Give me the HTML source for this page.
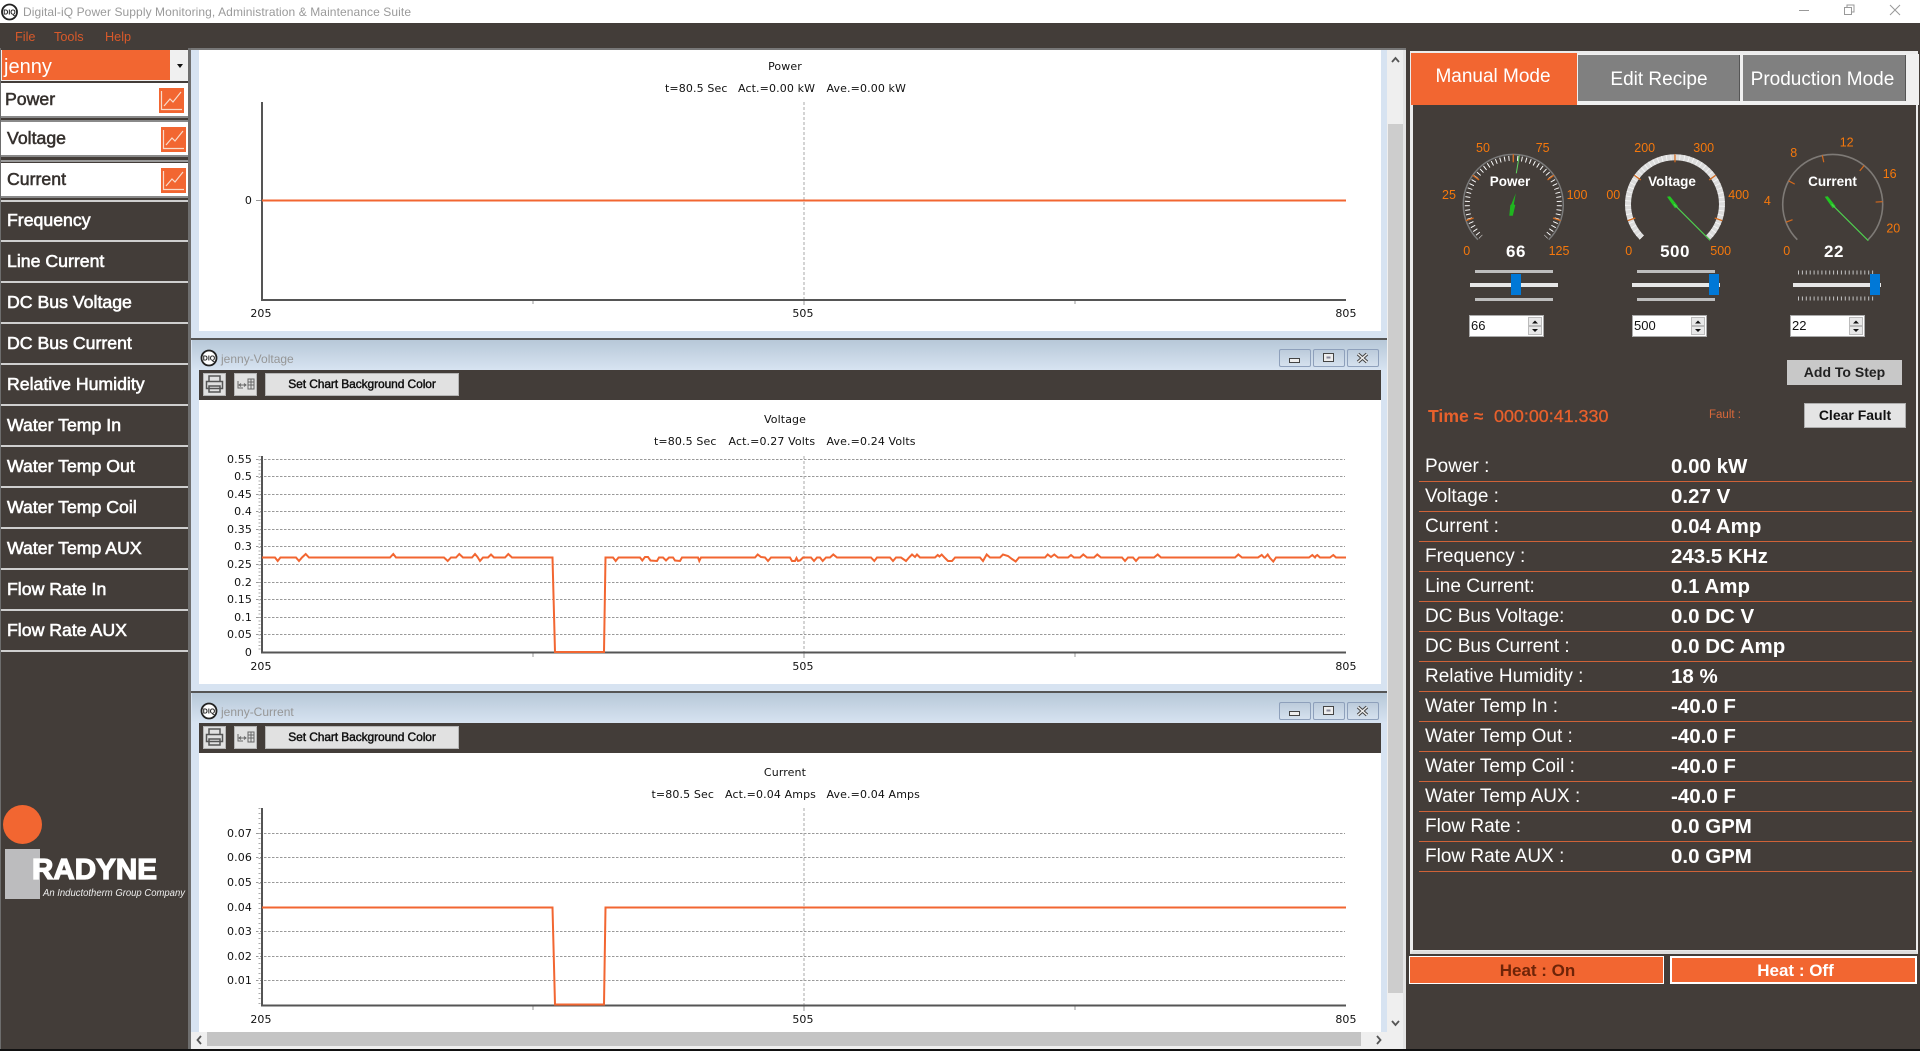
<!DOCTYPE html>
<html><head><meta charset="utf-8"><title>Digital-iQ</title>
<style>
html,body{margin:0;padding:0;width:1920px;height:1051px;overflow:hidden;background:#433d39;font-family:"Liberation Sans",sans-serif}
div{position:absolute;box-sizing:border-box}
.t{white-space:pre}
.nav{left:7px;color:#fff;font-size:17.7px;line-height:22px;-webkit-text-stroke:.6px #fff}
.sep{left:1px;width:187px;height:2px;background:#cfcfcf}
.wh{left:1px;width:187px;background:#fff;height:33px}
.navd{color:#35302d;font-size:17.7px;line-height:22px;-webkit-text-stroke:.55px #35302d}
.lb{left:1425px;color:#fff;font-size:19px;line-height:24px}
.vl{left:1671px;color:#fff;font-size:20.5px;font-weight:bold;line-height:24px}
.rl{left:1419px;width:493px;height:1px;background:#cf6238}
.spin{width:75px;height:22px;background:#fff;border:1px solid #ababab;color:#111;font-size:13px;line-height:20px;padding-left:1px}
.tbtn{background:#e1e1e1;border:1px solid #b5b5b5}
.wbtn{width:32px;height:18px;border:1px solid #8ea0bb;border-radius:2px;background:linear-gradient(#bccbdb,#d5e1ee)}
.tabt{color:#fff;font-size:19px;line-height:24px;text-align:center}
</style></head><body>

<!-- title bar -->
<div style="left:0;top:0;width:1920px;height:23px;background:#fff"></div>
<div class="t" style="left:15px;top:30px;color:#d8592a;font-size:12.7px;line-height:14px">File</div>
<div class="t" style="left:54px;top:30px;color:#d8592a;font-size:12.7px;line-height:14px">Tools</div>
<div class="t" style="left:105px;top:30px;color:#d8592a;font-size:12.7px;line-height:14px">Help</div>

<!-- left sidebar -->
<div style="left:0;top:48px;width:1px;height:1001px;background:#6d6d6d"></div>
<div style="left:188px;top:48px;width:3px;height:1001px;background:#6f6f6f"></div>
<div style="left:1px;top:50px;width:187px;height:31px;background:#f0f0f0"></div>
<div style="left:2px;top:50px;width:168px;height:30px;background:#f26631"></div>
<div class="t" style="left:4px;top:55px;color:#fff;font-size:20px;line-height:24px">jenny</div>
<div style="left:177px;top:64px;width:0;height:0;border-left:3px solid transparent;border-right:3px solid transparent;border-top:4px solid #111"></div>

<div class="wh" style="top:83px"></div><div class="sep" style="top:116px;background:#8a8a8a"></div><div class="sep" style="top:120px;background:#8a8a8a"></div>
<div class="wh" style="top:122px"></div><div class="sep" style="top:155px;background:#8a8a8a"></div><div class="sep" style="top:160px;background:#9a9a9a"></div>
<div class="wh" style="top:163px"></div><div class="sep" style="top:196px;background:#8a8a8a"></div>
<div class="t navd" style="left:5px;top:88px">Power</div>
<div class="t navd" style="left:7px;top:127px">Voltage</div>
<div class="t navd" style="left:7px;top:168px">Current</div>

<div class="sep" style="top:200px"></div><div class="sep" style="top:240px"></div><div class="sep" style="top:281px"></div><div class="sep" style="top:322px"></div><div class="sep" style="top:363px"></div><div class="sep" style="top:404px"></div><div class="sep" style="top:445px"></div><div class="sep" style="top:486px"></div><div class="sep" style="top:527px"></div><div class="sep" style="top:568px"></div><div class="sep" style="top:609px"></div><div class="sep" style="top:650px"></div>
<div class="t nav" style="top:209px">Frequency</div>
<div class="t nav" style="top:250px">Line Current</div>
<div class="t nav" style="top:291px">DC Bus Voltage</div>
<div class="t nav" style="top:332px">DC Bus Current</div>
<div class="t nav" style="top:373px">Relative Humidity</div>
<div class="t nav" style="top:414px">Water Temp In</div>
<div class="t nav" style="top:455px">Water Temp Out</div>
<div class="t nav" style="top:496px">Water Temp Coil</div>
<div class="t nav" style="top:537px">Water Temp AUX</div>
<div class="t nav" style="top:578px">Flow Rate In</div>
<div class="t nav" style="top:619px">Flow Rate AUX</div>

<!-- logo -->
<div style="left:3px;top:805px;width:39px;height:39px;border-radius:50%;background:#f26631"></div>
<div style="left:5px;top:849px;width:35px;height:50px;background:#bcbcbe"></div>

<!-- MDI area -->
<div style="left:191px;top:48px;width:1215px;height:1001px;background:#d7e3f1"></div>
<div style="left:191px;top:48px;width:1215px;height:2px;background:#777"></div>
<div style="left:199px;top:50px;width:1182px;height:281px;background:#fff"></div>

<!-- window 2 -->
<div style="left:191px;top:338px;width:1196px;height:2px;background:#555"></div>
<div style="left:192px;top:340px;width:1195px;height:30px;background:linear-gradient(#b7c8d8,#d7e3f1)"></div>
<div style="left:199px;top:370px;width:1182px;height:30px;background:#433d39"></div>
<div style="left:199px;top:400px;width:1182px;height:284px;background:#fff"></div>
<div class="t" style="left:221px;top:352px;color:#969696;font-size:12px;line-height:14px">jenny-Voltage</div>
<div class="tbtn" style="left:203px;top:373px;width:23px;height:23px"></div>
<div class="tbtn" style="left:234px;top:373px;width:23px;height:23px"></div>
<div class="tbtn t" style="left:265px;top:373px;width:194px;height:23px;text-align:center;font-size:12px;line-height:21px;color:#111;letter-spacing:-.1px;-webkit-text-stroke:.45px #111">Set Chart Background Color</div>
<div class="wbtn" style="left:1279px;top:349px"></div><div class="wbtn" style="left:1313px;top:349px"></div><div class="wbtn" style="left:1347px;top:349px"></div>

<!-- window 3 -->
<div style="left:191px;top:691px;width:1196px;height:2px;background:#555"></div>
<div style="left:192px;top:693px;width:1195px;height:30px;background:linear-gradient(#b7c8d8,#d7e3f1)"></div>
<div style="left:199px;top:723px;width:1182px;height:30px;background:#433d39"></div>
<div style="left:199px;top:753px;width:1182px;height:279px;background:#fff"></div>
<div class="t" style="left:221px;top:705px;color:#969696;font-size:12px;line-height:14px">jenny-Current</div>
<div class="tbtn" style="left:203px;top:726px;width:23px;height:23px"></div>
<div class="tbtn" style="left:234px;top:726px;width:23px;height:23px"></div>
<div class="tbtn t" style="left:265px;top:726px;width:194px;height:23px;text-align:center;font-size:12px;line-height:21px;color:#111;letter-spacing:-.1px;-webkit-text-stroke:.45px #111">Set Chart Background Color</div>
<div class="wbtn" style="left:1279px;top:702px"></div><div class="wbtn" style="left:1313px;top:702px"></div><div class="wbtn" style="left:1347px;top:702px"></div>

<!-- scrollbars -->
<div style="left:1387px;top:50px;width:16px;height:982px;background:#efefef"></div>
<div style="left:1403px;top:50px;width:3px;height:999px;background:#e4e4e4"></div>
<div style="left:1388px;top:124px;width:15px;height:869px;background:#cdcdcd"></div>
<div style="left:191px;top:1032px;width:1212px;height:17px;background:#efefef"></div>
<div style="left:207px;top:1032px;width:1154px;height:14px;background:#c4c4c4"></div>
<div style="left:0;top:1049px;width:1920px;height:2px;background:#111"></div>

<!-- right panel -->
<div style="left:1410px;top:51px;width:508px;height:903px;background:#e8e8e8;border:3px solid #ececec;border-right-width:2px;border-bottom-color:#ddd"></div>
<div style="left:1413px;top:54px;width:503px;height:896px;background:#433d39"></div>
<div style="left:1411px;top:53px;width:166px;height:52px;background:#f26631"></div>
<div style="left:1577px;top:54px;width:342px;height:51px;background:#f0f0f0"></div>
<div style="left:1578px;top:55px;width:162px;height:46px;background:#808080;border-right:1px solid #555"></div>
<div style="left:1743px;top:55px;width:163px;height:46px;background:#808080;border-right:1px solid #555"></div>
<div class="tabt t" style="left:1410px;top:65px;width:166px">Manual Mode</div>
<div class="tabt t" style="left:1578px;top:68px;width:162px">Edit Recipe</div>
<div class="tabt t" style="left:1742px;top:68px;width:161px">Production Mode</div>

<div class="spin" style="left:1469px;top:315px">66</div>
<div class="spin" style="left:1632px;top:315px">500</div>
<div class="spin" style="left:1790px;top:315px">22</div>

<div class="t" style="left:1787px;top:360px;width:115px;height:25px;background:#c8c8c8;text-align:center;font-size:14px;font-weight:bold;color:#222;line-height:25px">Add To Step</div>
<div class="t" style="left:1804px;top:403px;width:102px;height:25px;background:#e4e4e4;border:1px solid #adadad;text-align:center;font-size:14px;font-weight:bold;color:#111;line-height:23px">Clear Fault</div>
<div class="t" style="left:1428px;top:405px;color:#e8602c;font-size:17.6px;font-weight:bold;line-height:22px">Time ≈</div>
<div class="t" style="left:1494px;top:405px;color:#e8602c;font-size:17.9px;line-height:22px;-webkit-text-stroke:.3px #e8602c">000:00:41.330</div>
<div class="t" style="left:1709px;top:408px;color:#d9683a;font-size:11.5px;line-height:14px">Fault :</div>

<div class="t lb" style="top:455px">Power :</div><div class="t vl" style="top:455px">0.00 kW</div><div class="rl" style="top:481px"></div>
<div class="t lb" style="top:485px">Voltage :</div><div class="t vl" style="top:485px">0.27 V</div><div class="rl" style="top:511px"></div>
<div class="t lb" style="top:515px">Current :</div><div class="t vl" style="top:515px">0.04 Amp</div><div class="rl" style="top:541px"></div>
<div class="t lb" style="top:545px">Frequency :</div><div class="t vl" style="top:545px">243.5 KHz</div><div class="rl" style="top:571px"></div>
<div class="t lb" style="top:575px">Line Current:</div><div class="t vl" style="top:575px">0.1 Amp</div><div class="rl" style="top:601px"></div>
<div class="t lb" style="top:605px">DC Bus Voltage:</div><div class="t vl" style="top:605px">0.0 DC V</div><div class="rl" style="top:631px"></div>
<div class="t lb" style="top:635px">DC Bus Current :</div><div class="t vl" style="top:635px">0.0 DC Amp</div><div class="rl" style="top:661px"></div>
<div class="t lb" style="top:665px">Relative Humidity :</div><div class="t vl" style="top:665px">18 %</div><div class="rl" style="top:691px"></div>
<div class="t lb" style="top:695px">Water Temp In :</div><div class="t vl" style="top:695px">-40.0 F</div><div class="rl" style="top:721px"></div>
<div class="t lb" style="top:725px">Water Temp Out :</div><div class="t vl" style="top:725px">-40.0 F</div><div class="rl" style="top:751px"></div>
<div class="t lb" style="top:755px">Water Temp Coil :</div><div class="t vl" style="top:755px">-40.0 F</div><div class="rl" style="top:781px"></div>
<div class="t lb" style="top:785px">Water Temp AUX :</div><div class="t vl" style="top:785px">-40.0 F</div><div class="rl" style="top:811px"></div>
<div class="t lb" style="top:815px">Flow Rate :</div><div class="t vl" style="top:815px">0.0 GPM</div><div class="rl" style="top:841px"></div>
<div class="t lb" style="top:845px">Flow Rate AUX :</div><div class="t vl" style="top:845px">0.0 GPM</div><div class="rl" style="top:871px"></div>

<div class="t" style="left:1409px;top:956px;width:255px;height:28px;background:#f26631;border:1px solid #fff;text-align:center;color:#6e2408;font-size:17px;font-weight:bold;line-height:28px;padding-left:2px">Heat : On</div>
<div class="t" style="left:1670px;top:956px;width:247px;height:28px;background:#f26631;border:2px solid #fff;text-align:center;color:#fff;font-size:17px;font-weight:bold;line-height:26px;padding-left:4px">Heat : Off</div>

<!-- vector overlay -->
<svg width="1920" height="1051" viewBox="0 0 1920 1051" style="position:absolute;left:0;top:0" xmlns="http://www.w3.org/2000/svg" font-family="'DejaVu Sans',sans-serif">
<defs>
<g id="diq"><circle r="7.500" fill="#fff" stroke="#222" stroke-width="1.800"/><text y="2.500" text-anchor="middle" font-size="7" font-weight="bold" fill="#222" font-family="'Liberation Sans',sans-serif">DIQ</text></g>
<g id="chartico"><rect width="25" height="25" fill="#f26631"/><path d="M2.500 3V21.500H23M5 18L11 11L14 14L22 4" fill="none" stroke="#f8dccb" stroke-width="1.200"/></g>
<g id="toolicons">
<path d="M209 381v-5h11v5M206.500 381.500h16v7h-16zM209 386h11v6h-11z" fill="none" stroke="#555" stroke-width="1.500"/>
<path d="M238 381v7h5M240 385h5M244 383.500l2 1.500-2 1.500M241 383.500l-2 1.500 2 1.500M248 379h6v10h-6zM248 382h6M248 385h6M251 379v10" fill="none" stroke="#666" stroke-width="1"/>
</g>
<g id="wctl">
<rect x="1289.500" y="358.500" width="10" height="4" fill="#eee" stroke="#444" stroke-width="1"/>
<rect x="1323.500" y="353.500" width="10" height="8" fill="#eee" stroke="#444" stroke-width="1"/><rect x="1326.500" y="356.500" width="4" height="2" fill="#889" />
<path d="M1358 354l9 8M1367 354l-9 8" stroke="#444" stroke-width="3.500"/><path d="M1358 354l9 8M1367 354l-9 8" stroke="#eee" stroke-width="1.500"/>
</g>
</defs>

<!-- title bar -->
<use href="#diq" x="9.500" y="12"/>
<text x="23" y="16" font-family="'Liberation Sans',sans-serif" font-size="12" fill="#9a9a9a" textLength="388">Digital-iQ Power Supply Monitoring, Administration &amp; Maintenance Suite</text>
<path d="M1799 10.500h10" stroke="#999"/>
<path d="M1844.500 7.500h7v7h-7zM1847 7V5h7v7h-2.500" fill="none" stroke="#999"/>
<path d="M1890 5l10 10M1900 5l-10 10" stroke="#999"/>

<!-- sidebar icons -->
<use href="#chartico" x="159" y="88"/><use href="#chartico" x="161" y="127"/><use href="#chartico" x="161" y="168"/>

<!-- logo text -->
<text x="32" y="879" font-family="'Liberation Sans',sans-serif" font-size="29" font-weight="bold" fill="#fff" stroke="#fff" stroke-width="1.300" textLength="125" lengthAdjust="spacingAndGlyphs">RADYNE</text>
<text x="43" y="896" font-family="'Liberation Sans',sans-serif" font-size="10.500" font-style="italic" fill="#eee" textLength="142" lengthAdjust="spacingAndGlyphs">An Inductotherm Group Company</text>

<!-- window chrome icons -->
<use href="#diq" x="209" y="358"/><use href="#diq" x="209" y="711"/>
<use href="#toolicons"/><use href="#toolicons" y="353"/>
<use href="#wctl"/><use href="#wctl" y="353"/>

<!-- scrollbar arrows -->
<g fill="none" stroke="#555" stroke-width="1.800">
<path d="M1392 62l3.500-4 3.500 4"/><path d="M1392 1021l3.500 4 3.500-4"/><path d="M201 1036l-3.500 4 3.500 4"/><path d="M1377 1036l3.500 4-3.500 4"/>
</g>

<!-- CHART 1 -->
<g font-size="11" fill="#111" letter-spacing=".12">
<text x="785" y="70" text-anchor="middle">Power</text>
<text x="665" y="92">t=80.5 Sec</text><text x="738" y="92">Act.=0.00 kW</text><text x="826.500" y="92">Ave.=0.00 kW</text>
<text x="252" y="204" text-anchor="end">0</text>
<text x="261" y="317" text-anchor="middle">205</text><text x="803" y="317" text-anchor="middle">505</text><text x="1346" y="317" text-anchor="middle">805</text>
</g>
<path d="M804 102V299" stroke="#aaa" stroke-dasharray="3 2"/>
<path d="M533 300v4M804 300v5M1075 300v4M256 200.500h5" stroke="#999"/>
<path d="M262 102V300H1346" fill="none" stroke="#555" stroke-width="2"/>
<path d="M262 200.500H1346" stroke="#f26631" stroke-width="2"/>

<!-- CHART 2 -->
<g font-size="11" fill="#111" letter-spacing=".12">
<text x="785" y="423" text-anchor="middle">Voltage</text>
<text x="654" y="445">t=80.5 Sec</text><text x="728.500" y="445">Act.=0.27 Volts</text><text x="826.500" y="445">Ave.=0.24 Volts</text>
<g text-anchor="end"><text x="252" y="463">0.55</text><text x="252" y="480">0.5</text><text x="252" y="498">0.45</text><text x="252" y="515">0.4</text><text x="252" y="533">0.35</text><text x="252" y="550">0.3</text><text x="252" y="568">0.25</text><text x="252" y="586">0.2</text><text x="252" y="603">0.15</text><text x="252" y="621">0.1</text><text x="252" y="638">0.05</text><text x="252" y="656">0</text></g>
<text x="261" y="670" text-anchor="middle">205</text><text x="803" y="670" text-anchor="middle">505</text><text x="1346" y="670" text-anchor="middle">805</text>
</g>
<path d="M256 459.500H1345M256 476.500H1345M256 494.500H1345M256 511.500H1345M256 529.500H1345M256 546.500H1345M256 564.500H1345M256 582.500H1345M256 599.500H1345M256 617.500H1345M256 634.500H1345" stroke="#999" stroke-dasharray="2.500 1.500"/>
<path d="M804 456V652" stroke="#aaa" stroke-dasharray="3 2"/>
<path d="M259.500 456V652" stroke="#aaa" stroke-width="2" stroke-dasharray="1 2.500"/>
<path d="M533 653v4M804 653v5M1075 653v4" stroke="#999"/>
<path d="M262 456V652.500H1346" fill="none" stroke="#555" stroke-width="2"/>
<polyline fill="none" stroke="#f26631" stroke-width="2" points="262,557.5 275,557.5 277.7,561 280.4,557.5 296,557.5 299,561 302,557.5 305.7,554 309,557.5 390,557.5 393.3,554 396,557.5 444,557.5 447.7,561 451,557.5 456,557.5 459.3,554 463,557.5 472,557.5 475,554 477.5,557 480,561 483,557.5 488,557.5 491,554.5 494,557.5 505,557.5 508.3,554 512,557.5 552.5,557.5 555,652 604,652 605.5,557.5 613,557.5 615.7,561 618.5,557.5 640,557.5 642.3,560.5 645,557 648,557 650.5,560.5 657,561 659,557.5 663,557.5 666,560.5 669,557.5 673,557.5 675,560.5 680,561 682,557.5 698,557.5 699.3,561 701,557.5 755,557.5 757.7,554.5 761,557 765,557.5 768,561 771,557.5 790,557.5 792,561 795,561 796.5,558 798,561 800,560.5 803,557.5 811,557.5 814,561 817,557.5 820,557.5 822.7,561 826,557.5 830,557.5 833.3,554.5 837,557.5 871,557.5 874.3,561 877,557.5 890,557.5 893,561 896,557.5 901,557.5 906,561 909,557.5 912,554.5 915,557 917,554.5 920,557.5 935,557.5 937.7,555 939.5,556.5 941.7,554.5 945,558 948,561 952,561 955,557.5 980,557.5 983,561 986.7,554.5 990,557.5 1000,557.5 1003,554.5 1008,556 1012,559 1015.7,561.5 1019,557.5 1045,557.5 1047.7,554.5 1051,557 1054.3,554.5 1058,557.5 1068,557.5 1071,555 1074,557.5 1080,557.5 1083.3,554.5 1087,557.5 1094,557.5 1097.3,554.5 1101,557.5 1122,557.5 1125,561 1128,557.5 1133,557.5 1136,561 1139,557.5 1154,557.5 1157.7,554.5 1161,557.5 1235,557.5 1238.3,554.5 1242,557.5 1258,557.5 1261.7,555 1264,557.5 1265,557.5 1267.7,554.5 1270,558 1273.3,561.5 1276,557.5 1309,557.5 1312.3,555 1315,557.5 1316,556 1317.3,555 1320,557.5 1330,557.5 1333.3,555 1336,557.5 1346,557.5"/>

<!-- CHART 3 -->
<g font-size="11" fill="#111" letter-spacing=".12">
<text x="785" y="776" text-anchor="middle">Current</text>
<text x="651.500" y="798">t=80.5 Sec</text><text x="725" y="798">Act.=0.04 Amps</text><text x="826.500" y="798">Ave.=0.04 Amps</text>
<g text-anchor="end"><text x="252" y="837">0.07</text><text x="252" y="861">0.06</text><text x="252" y="886">0.05</text><text x="252" y="911">0.04</text><text x="252" y="935">0.03</text><text x="252" y="960">0.02</text><text x="252" y="984">0.01</text></g>
<text x="261" y="1023" text-anchor="middle">205</text><text x="803" y="1023" text-anchor="middle">505</text><text x="1346" y="1023" text-anchor="middle">805</text>
</g>
<path d="M256 833.500H1345M256 857.500H1345M256 882.500H1345M256 931.500H1345M256 956.500H1345M256 980.500H1345" stroke="#999" stroke-dasharray="2.500 1.500"/>
<path d="M804 808V1005" stroke="#aaa" stroke-dasharray="3 2"/>
<path d="M259.500 808V1005" stroke="#aaa" stroke-width="2" stroke-dasharray="1 4"/>
<path d="M533 1006v4M804 1006v5M1075 1006v4" stroke="#999"/>
<path d="M262 808V1005.500H1346" fill="none" stroke="#555" stroke-width="2"/>
<path d="M262 907.500H552.500L555 1004.500H604L605.500 907.500H1346" fill="none" stroke="#f26631" stroke-width="2"/>

<!-- GAUGE labels -->
<g font-family="'Liberation Sans',sans-serif" font-size="12.500" fill="#f5780c" text-anchor="middle">
<text x="1466.700" y="255">0</text><text x="1449" y="199">25</text><text x="1483" y="152">50</text><text x="1542.700" y="152">75</text><text x="1577" y="199">100</text><text x="1559" y="255">125</text>
<text x="1628.700" y="255">0</text><text x="1613.300" y="199">00</text><text x="1644.700" y="152">200</text><text x="1703.700" y="152">300</text><text x="1738.700" y="199">400</text><text x="1720.700" y="255">500</text>
<text x="1786.700" y="255">0</text><text x="1767.300" y="205">4</text><text x="1793.700" y="157">8</text><text x="1846.700" y="146.500">12</text><text x="1889.700" y="178">16</text><text x="1893.300" y="232.500">20</text>
</g>
<g font-family="'Liberation Sans',sans-serif" font-size="13.500" font-weight="bold" fill="#fff" text-anchor="middle">
<text x="1510" y="186">Power</text><text x="1672" y="186">Voltage</text><text x="1832.500" y="186">Current</text>
</g>
<g font-family="'Liberation Sans',sans-serif" font-size="17" letter-spacing=".5" font-weight="bold" fill="#fff" text-anchor="middle">
<text x="1516" y="257">66</text><text x="1675" y="257">500</text><text x="1834" y="257">22</text>
</g>

<!-- Power gauge -->
<g transform="translate(1513.300 204.300)" fill="none">
<path d="M-35.400 35.400A50 50 0 1 1 35.400 35.400" stroke="#7a7a7a" stroke-width="1.500"/>
<path d="M-32.500 32.500A46 46 0 1 1 32.500 32.500" stroke="#fff" stroke-width="5" pathLength="50" stroke-dasharray=".22 .78" stroke-dashoffset=".11"/>
<g stroke="#d4691c" stroke-width="1.300"><path d="M0-50V-42" /><path d="M0-50V-42" transform="rotate(-54.500)"/><path d="M0-50V-42" transform="rotate(54.500)"/><path d="M0-50V-42" transform="rotate(-109)"/><path d="M0-50V-42" transform="rotate(109)"/></g>
<path d="M6-49L3-31" stroke="#5fd65f" stroke-width="1"/>
<path d="M2.500-11L.5 0L2 1-0.500 11.500L-4 11.500L-3 1L-2 0Z" fill="#1fb51f"/>
</g>
<!-- Voltage gauge -->
<g transform="translate(1675 204.300)" fill="none">
<path d="M-33.200 33.200A47 47 0 1 1 33.200 33.200" stroke="#dcdcdc" stroke-width="6"/>
<path d="M-33.200 33.200A47 47 0 1 1 33.200 33.200" stroke="#fff" stroke-width="6" pathLength="50" stroke-dasharray=".2 .8" opacity=".7"/>
<g stroke="#d4691c" stroke-width="1.300"><path d="M0-50V-42"/><path d="M0-50V-42" transform="rotate(-54.500)"/><path d="M0-50V-42" transform="rotate(54.500)"/><path d="M0-50V-42" transform="rotate(-109)"/><path d="M0-50V-42" transform="rotate(109)"/></g>
<path d="M-8-7.500L-5-8L3 2L0 4Z" fill="#22c622"/>
<path d="M-1 0L35 36" stroke="#4fd24f" stroke-width="1.100"/>
</g>
<!-- Current gauge -->
<g transform="translate(1832.700 204.300)" fill="none">
<path d="M-35.400 35.400A50 50 0 1 1 35.400 35.400" stroke="#7e7a76" stroke-width="1.600"/>
<g stroke="#d4691c" stroke-width="1.200"><path d="M0-50V-43" transform="rotate(-111)"/><path d="M0-50V-43" transform="rotate(-62)"/><path d="M0-50V-43" transform="rotate(-12)"/><path d="M0-50V-43" transform="rotate(39)"/><path d="M0-50V-43" transform="rotate(87)"/></g>
<path d="M-8-7.500L-5-8L3 2L0 4Z" fill="#22c622"/>
<path d="M-1 0L35.600 36.400" stroke="#4fd24f" stroke-width="1.100"/>
</g>

<!-- Sliders -->
<g fill="#e7e7e7"><rect x="1470" y="283" width="88" height="4"/><rect x="1632" y="283" width="88" height="4"/><rect x="1793" y="283" width="88" height="4"/></g>
<g fill="#bdbdbd"><rect x="1475" y="270" width="78" height="3"/><rect x="1475" y="298" width="78" height="3"/><rect x="1637" y="270" width="78" height="3"/><rect x="1637" y="298" width="78" height="3"/></g>
<path d="M1798 272.500H1876M1798 298.500H1876" stroke="#c4c4c4" stroke-width="4" stroke-dasharray="1 2.900"/>
<g fill="#0078d7"><rect x="1511" y="274" width="10" height="21"/><rect x="1709" y="274" width="10" height="21"/><rect x="1870" y="274" width="10" height="21"/></g>

<!-- Spin buttons -->
<g id="sp">
<rect x="1528.500" y="317.500" width="13" height="8" fill="#e8e8e8" stroke="#bbb"/><rect x="1528.500" y="326.500" width="13" height="8" fill="#e8e8e8" stroke="#bbb"/>
<path d="M1532 323.500l3-3 3 3zM1532 329l3 3 3-3z" fill="#111"/>
</g>
<use href="#sp" x="163"/><use href="#sp" x="321"/>
</svg>
</body></html>
